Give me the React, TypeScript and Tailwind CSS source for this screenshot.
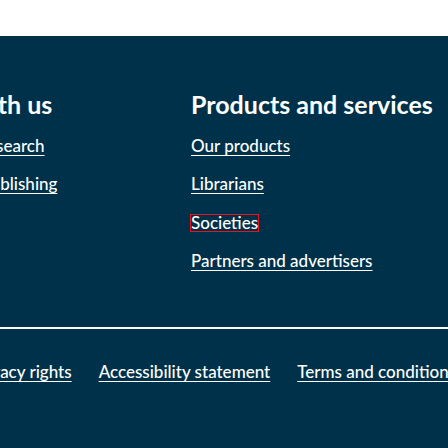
import React from "react";

const font = { fontFamily: "Lato, 'Open Sans', sans-serif" };

function Link({ children, focus = false }: { children: React.ReactNode; focus?: boolean }) {
  if (focus) {
    return (
      <div className="h-[20px] leading-[20px]">
        <a className="inline-block leading-[16px] outline outline-1 outline-[#e5161f] text-white">{children}</a>
      </div>
    );
  }
  return (
    <div className="h-[20px] leading-[20px]">
      <a className="text-white underline decoration-1 underline-offset-[3px]">{children}</a>
    </div>
  );
}

export default function App() {
  return (
    <div className="w-[448px] h-[448px] overflow-hidden bg-white" style={font}>
      <div className="h-[36px] bg-white" />
      <div className="h-[412px] bg-[#00314a] overflow-hidden text-white">
        <div className="flex whitespace-nowrap pt-[53px] ml-[-96px]">
          <div className="w-[287px] shrink-0">
            <h2 className="text-[25px] leading-[30px] font-bold">Work with us</h2>
            <div className="mt-[17px] flex flex-col gap-[18.4px] text-[17px] font-medium">
              <Link>Academic research</Link>
              <Link>Academic publishing</Link>
            </div>
          </div>
          <div className="shrink-0">
            <h2 className="text-[25px] leading-[30px] font-bold">Products and services</h2>
            <div className="mt-[17px] flex flex-col gap-[18.4px] text-[17px] font-medium">
              <Link>Our products</Link>
              <Link>Librarians</Link>
              <Link focus>Societies</Link>
              <Link>Partners and advertisers</Link>
            </div>
          </div>
        </div>
        <div className="h-[2px] bg-white mt-[56px]" />
        <div className="flex whitespace-nowrap gap-[27px] ml-[-29px] mt-[33px] text-[17px] font-medium">
          <Link>Privacy rights</Link>
          <Link>Accessibility statement</Link>
          <Link>Terms and conditions</Link>
        </div>
      </div>
    </div>
  );
}
